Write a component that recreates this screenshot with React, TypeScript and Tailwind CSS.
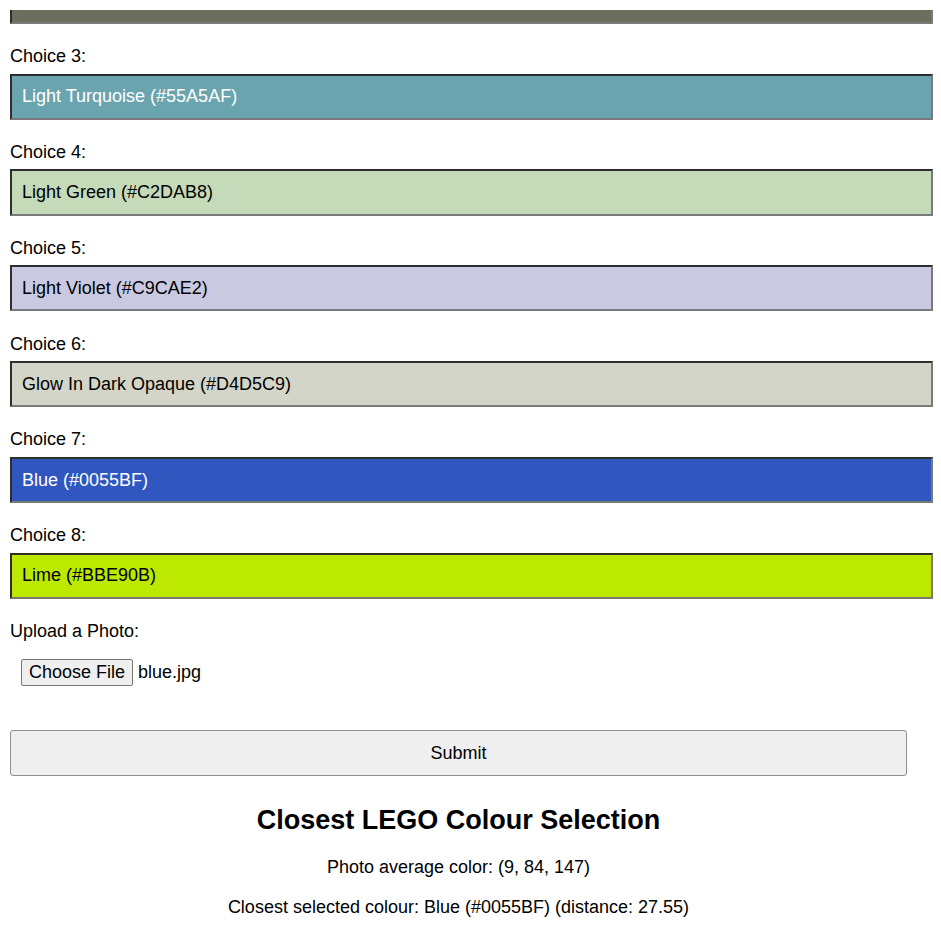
import React from "react";

const choices = [
  { n: 3, label: "Light Turquoise (#55A5AF)", bg: "bg-[#6aa5af]", text: "text-white" },
  { n: 4, label: "Light Green (#C2DAB8)", bg: "bg-[#c5dab9]", text: "text-black" },
  { n: 5, label: "Light Violet (#C9CAE2)", bg: "bg-[#c9cae2]", text: "text-black" },
  { n: 6, label: "Glow In Dark Opaque (#D4D5C9)", bg: "bg-[#d4d5c9]", text: "text-black" },
  { n: 7, label: "Blue (#0055BF)", bg: "bg-[#3056c0]", text: "text-white" },
  { n: 8, label: "Lime (#BBE90B)", bg: "bg-[#bde900]", text: "text-black" },
];

export default function App() {
  return (
    <div className="min-h-[939px] bg-white text-black font-['Liberation_Sans',Arial,sans-serif] text-[18px] leading-[20.7px] overflow-hidden">
      <div className="ml-[10px] w-[897px] pt-[10px]">
        <div className="h-[14px] w-[923px] bg-[#6c6e5b] border-l-2 border-r-2 border-b-2 border-l-[#2e2e2e] border-r-[#7a7a7a] border-b-[#7a7a7a]" />
        {choices.map((c) => (
          <div key={c.n} className="mt-[22.25px]">
            <div className="h-[20.7px]">Choice {c.n}:</div>
            <div
              className={`mt-[6.75px] h-[46.1px] w-[923px] flex items-center pl-[10px] border-2 border-t-[#2e2e2e] border-l-[#2e2e2e] border-r-[#7a7a7a] border-b-[#7a7a7a] ${c.bg} ${c.text}`}
            >
              {c.label}
            </div>
          </div>
        ))}
        <div className="mt-[22px] h-[20.7px]">Upload a Photo:</div>
        <div className="mt-[17.5px] flex items-center ml-[11px] h-[27px]">
          <div className="h-[27px] px-[7px] flex items-center border border-[#767676] rounded-[2px] bg-[#efefef]">
            Choose File
          </div>
          <span className="ml-[5px]">blue.jpg</span>
        </div>
        <div className="mt-[44px] h-[46px] w-[897px] flex items-center justify-center border border-[#8f8f8f] rounded-[3px] bg-[#efefef]">
          Submit
        </div>
        <div className="mt-[29.5px] text-center font-bold text-[27px] leading-[31px]">
          Closest LEGO Colour Selection
        </div>
        <div className="mt-[21px] text-center">Photo average color: (9, 84, 147)</div>
        <div className="mt-[19px] text-center">
          Closest selected colour: Blue (#0055BF) (distance: 27.55)
        </div>
      </div>
    </div>
  );
}
